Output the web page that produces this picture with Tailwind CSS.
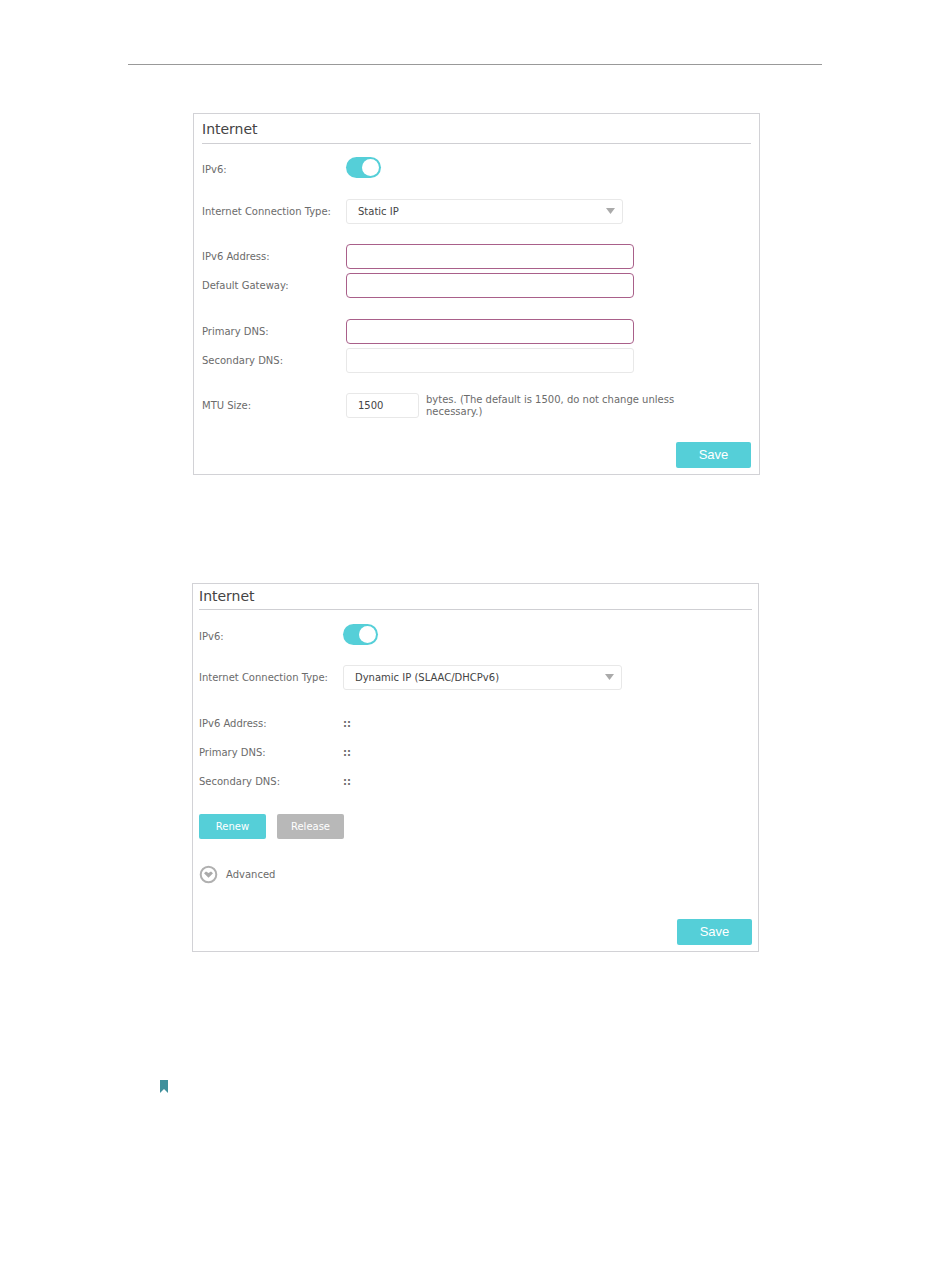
<!DOCTYPE html>
<html lang="en">
<head>
    <meta charset="UTF-8">
    <meta name="viewport" content="width=device-width, initial-scale=1.0">
    <title>Internet - IPv6</title>
    <script src="https://cdn.jsdelivr.net/npm/@tailwindcss/browser@4"></script>
</head>
<body class="bg-white px-32 pt-16 font-['DejaVu_Sans',Verdana,sans-serif] text-[10px] leading-3 text-[#6b6b6b]">

    <hr class="border-[#999999]">

    <!-- Static IP -->
    <form class="mt-12 mr-[62px] ml-[65px] border border-[#d2d2d6] px-2 pb-[6px]">
        <h2 class="h-[30px] border-b border-[#cfcfd3] text-[14px] leading-[30px] text-[#444444]">Internet</h2>

        <div class="mt-[13px] flex items-center">
            <label for="ipv6-static" class="w-36 shrink-0 pt-1">IPv6:</label>
            <input id="ipv6-static" type="checkbox" role="switch" checked class="h-[21px] w-[35px] appearance-none rounded-full bg-[#55cfd8] before:mt-[2px] before:ml-[2px] before:block before:size-[17px] before:rounded-full before:bg-white before:content-[''] checked:before:ml-4">
        </div>

        <div class="mt-[21px] flex items-center">
            <label for="type-static" class="w-36 shrink-0 whitespace-nowrap">Internet Connection Type:</label>
            <div class="relative w-[277px]">
                <select id="type-static" class="block h-[25px] w-full appearance-none rounded-[3px] border border-[#e8e8e8] px-[11px] text-[#444444]">
                    <option>Static IP</option>
                    <option>Dynamic IP (SLAAC/DHCPv6)</option>
                </select>
                <svg class="pointer-events-none absolute top-[9px] right-2 h-[6px] w-[9px] fill-[#aaaaaa]" viewBox="0 0 9 6"><path d="M0 0h9L4.5 6z"/></svg>
            </div>
        </div>

        <div class="mt-5 flex items-center">
            <label for="address" class="w-36 shrink-0">IPv6 Address:</label>
            <input id="address" type="text" class="h-[25px] w-[288px] rounded-[4px] border border-[#a9608a] px-[11px]">
        </div>
        <div class="mt-1 flex items-center">
            <label for="gateway" class="w-36 shrink-0">Default Gateway:</label>
            <input id="gateway" type="text" class="h-[25px] w-[288px] rounded-[4px] border border-[#a9608a] px-[11px]">
        </div>

        <div class="mt-[21px] flex items-center">
            <label for="primary" class="w-36 shrink-0">Primary DNS:</label>
            <input id="primary" type="text" class="h-[25px] w-[288px] rounded-[4px] border border-[#a9608a] px-[11px]">
        </div>
        <div class="mt-1 flex items-center">
            <label for="secondary" class="w-36 shrink-0">Secondary DNS:</label>
            <input id="secondary" type="text" class="h-[25px] w-[288px] rounded-[3px] border border-[#e8e8e8] px-[11px]">
        </div>

        <div class="mt-5 flex items-center">
            <label for="mtu" class="w-36 shrink-0">MTU Size:</label>
            <input id="mtu" type="text" value="1500" class="h-[25px] w-[73px] rounded-[3px] border border-[#e8e8e8] px-[11px] text-[#444444]">
            <p class="ml-[7px] w-[256px]">bytes. (The default is 1500, do not change unless necessary.)</p>
        </div>

        <div class="mt-6 flex justify-end">
            <button type="button" class="h-[26px] w-[75px] rounded-[2px] bg-[#55cfd8] font-['Liberation_Sans',Arial,sans-serif] text-[13px] text-white">Save</button>
        </div>
    </form>

    <!-- Dynamic IP -->
    <form class="mt-[108px] mr-[63px] ml-16 border border-[#d2d2d6] px-[6px] pb-[6px]">
        <h2 class="h-[26px] border-b border-[#cfcfd3] text-[14px] leading-[24px] text-[#444444]">Internet</h2>

        <div class="mt-[14px] flex items-center">
            <label for="ipv6-dynamic" class="w-36 shrink-0 pt-1">IPv6:</label>
            <input id="ipv6-dynamic" type="checkbox" role="switch" checked class="h-[21px] w-[35px] appearance-none rounded-full bg-[#55cfd8] before:mt-[2px] before:ml-[2px] before:block before:size-[17px] before:rounded-full before:bg-white before:content-[''] checked:before:ml-4">
        </div>

        <div class="mt-5 flex items-center">
            <label for="type-dynamic" class="w-36 shrink-0 whitespace-nowrap">Internet Connection Type:</label>
            <div class="relative w-[279px]">
                <select id="type-dynamic" class="block h-[25px] w-full appearance-none rounded-[3px] border border-[#e8e8e8] px-[11px] text-[#444444]">
                    <option>Dynamic IP (SLAAC/DHCPv6)</option>
                    <option>Static IP</option>
                </select>
                <svg class="pointer-events-none absolute top-[9px] right-2 h-[6px] w-[9px] fill-[#aaaaaa]" viewBox="0 0 9 6"><path d="M0 0h9L4.5 6z"/></svg>
            </div>
        </div>

        <dl class="mt-7 grid grid-cols-[144px_1fr] gap-y-[17px]">
            <dt>IPv6 Address:</dt>
            <dd class="font-bold">::</dd>
            <dt>Primary DNS:</dt>
            <dd class="font-bold">::</dd>
            <dt>Secondary DNS:</dt>
            <dd class="font-bold">::</dd>
        </dl>

        <div class="mt-[26px] flex gap-[11px]">
            <button type="button" class="h-[25px] w-[67px] rounded-[2px] bg-[#55cfd8] text-white">Renew</button>
            <button type="button" class="h-[25px] w-[67px] rounded-[2px] bg-[#b8b8b8] text-white">Release</button>
        </div>

        <button type="button" class="mt-[26px] flex items-center gap-2">
            <svg class="size-[19px]" viewBox="0 0 19 19">
                <circle cx="9.5" cy="9.5" r="7.8" fill="none" stroke="#b0b0b0" stroke-width="2"/>
                <path d="M5 8.3 7 6.6 9.5 8.1 12 6.6 14 8.3 9.5 12.8z" fill="#aaaaaa"/>
            </svg>
            Advanced
        </button>

        <div class="mt-[35px] flex justify-end">
            <button type="button" class="h-[26px] w-[75px] rounded-[2px] bg-[#55cfd8] font-['Liberation_Sans',Arial,sans-serif] text-[13px] text-white">Save</button>
        </div>
    </form>

    <!-- Note bookmark -->
    <svg class="mt-32 ml-8 h-[13px] w-2 fill-[#3f909c]" viewBox="0 0 8 13"><path d="M0 0h8v13L4 9 0 13z"/></svg>

</body>
</html>
